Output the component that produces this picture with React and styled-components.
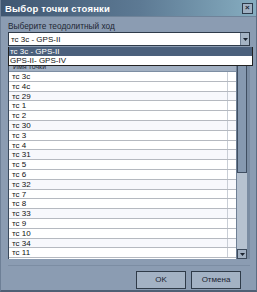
import React from "react";
import styled, { createGlobalStyle } from "styled-components";

const points = [
  "тс 3с",
  "тс 4с",
  "тс 29",
  "тс 1",
  "тс 2",
  "тс 30",
  "тс 3",
  "тс 4",
  "тс 31",
  "тс 5",
  "тс 6",
  "тс 32",
  "тс 7",
  "тс 8",
  "тс 33",
  "тс 9",
  "тс 10",
  "тс 34",
  "тс 11",
];

const routes = ["тс 3с - GPS-II", "GPS-II- GPS-IV"];

const GlobalStyle = createGlobalStyle`
  html, body {
    margin: 0;
    padding: 0;
    background: #8b9cb2;
  }
  body {
    font-family: "Liberation Sans", Arial, sans-serif;
    font-size: 8px;
  }
`;

const Window = styled.div`
  width: 257px;
  height: 292px;
  box-sizing: border-box;
  display: flex;
  flex-direction: column;
  background: #8b9cb2;
  border-left: 1px solid #6d7f96;
  border-right: 1px solid #5c6d83;
  border-bottom: 2px solid #4f5f74;
  overflow: hidden;
`;

const TitleBar = styled.div`
  height: 16px;
  display: flex;
  align-items: center;
  justify-content: space-between;
  padding: 0 3px 0 4px;
  background: linear-gradient(to right, #3f5671 0%, #5d7a94 55%, #86adc0 100%);
  border-bottom: 1px solid #6f8399;
  color: #ffffff;
  font-weight: bold;
  font-size: 9.5px;
  letter-spacing: 0.2px;
`;

const CloseButton = styled.div`
  width: 9px;
  height: 9px;
  display: flex;
  align-items: center;
  justify-content: center;
  background: #9fb0c2;
  border: 1px solid #2d3a4a;
  color: #1c2633;
  font-size: 8px;
  line-height: 1;
  font-weight: bold;
`;

const Body = styled.div`
  flex: 1;
  display: flex;
  flex-direction: column;
  padding: 0 6px 0 7px;
`;

const Label = styled.div`
  margin-top: 3px;
  height: 12px;
  line-height: 12px;
  color: #1e2733;
  font-size: 8.3px;
`;

const ComboWrap = styled.div`
  position: relative;
  height: 14px;
`;

const Combo = styled.div`
  height: 14px;
  box-sizing: border-box;
  display: flex;
  align-items: center;
  background: #ffffff;
  border: 1px solid #2f3b4a;
  padding-left: 2px;
  color: #111;
`;

const ComboText = styled.span`
  flex: 1;
`;

const ArrowButton = styled.div`
  width: 8px;
  height: 12px;
  display: flex;
  align-items: center;
  justify-content: center;
  background: #a4b3c4;
  border-left: 1px solid #6f8095;
`;

const Dropdown = styled.div`
  position: absolute;
  top: 15px;
  left: 0;
  right: -3px;
  z-index: 2;
  background: #ffffff;
  border: 1px solid #222;
  border-top: 0;
`;

const Option = styled.div`
  height: 9px;
  line-height: 9px;
  padding-left: 1px;
  background: ${(p) => (p.$active ? "#4b607c" : "#ffffff")};
  color: ${(p) => (p.$active ? "#ffffff" : "#111111")};
`;

const ListBox = styled.div`
  margin-top: 16px;
  display: flex;
  height: 197px;
  border-left: 1px solid #3b4a5c;
`;

const ListMain = styled.div`
  flex: 1;
  display: flex;
  flex-direction: column;
  background: #ffffff;
  overflow: hidden;
`;

const Header = styled.div`
  height: 9px;
  line-height: 9px;
  flex-shrink: 0;
  padding-left: 4px;
  background: #a2b0c2;
  border-bottom: 1px solid #7d8ea3;
  color: #1d2633;
  font-size: 7px;
`;

const Row = styled.div`
  height: 9.8px;
  flex-shrink: 0;
  box-sizing: border-box;
  display: flex;
  border-bottom: 1px solid #b5b9c0;
  background: ${(p) => (p.$shade ? "#f7f8fc" : "#ffffff")};
`;

const Cell = styled.div`
  flex: 1;
  padding-left: 3px;
  line-height: 9px;
  color: #111;
`;

const SpareCell = styled.div`
  width: 8px;
  border-left: 1px solid #c9ced6;
`;

const ScrollBar = styled.div`
  width: 10px;
  display: flex;
  flex-direction: column;
  background: #b6c2d0;
  border-left: 1px solid #6e7f94;
  border-right: 3px solid #7a8ca2;
`;

const ScrollButton = styled.div`
  height: 8px;
  flex-shrink: 0;
  display: flex;
  align-items: center;
  justify-content: center;
  background: #a2b1c3;
  border: 1px solid #3c4a5b;
`;

const Thumb = styled.div`
  height: 110px;
  flex-shrink: 0;
  background: #8699b0;
  border: 1px solid #3f4e61;
  border-top: 0;
`;

const Track = styled.div`
  flex: 1;
`;

const Footer = styled.div`
  flex: 1;
  display: flex;
  justify-content: flex-end;
  align-items: center;
  gap: 5px;
  padding: 3px 9px 0 0;
  border-top: 1px solid #7c8da3;
  margin-top: 6px;
`;

const Button = styled.div`
  width: 50px;
  height: 18px;
  box-sizing: border-box;
  display: flex;
  align-items: center;
  justify-content: center;
  background: #a3b2c4;
  border: 1px solid #2f3b49;
  color: #1a2230;
`;

const Arrow = () => (
  <svg width="5" height="3" viewBox="0 0 5 3">
    <path d="M0 0 H5 L2.5 3 Z" fill="#1b2430" />
  </svg>
);

const App = () => {
  return (
    <>
      <GlobalStyle />
      <Window>
        <TitleBar>
          <span>Выбор точки стоянки</span>
          <CloseButton>×</CloseButton>
        </TitleBar>
        <Body>
          <Label>Выберите теодолитный ход</Label>
          <ComboWrap>
            <Combo>
              <ComboText>{routes[0]}</ComboText>
              <ArrowButton>
                <Arrow />
              </ArrowButton>
            </Combo>
            <Dropdown>
              {routes.map((r, i) => (
                <Option key={r} $active={i === 0}>
                  {r}
                </Option>
              ))}
            </Dropdown>
          </ComboWrap>
          <ListBox>
            <ListMain>
              <Header>Имя точки</Header>
              {points.map((p, i) => (
                <Row key={p} $shade={i % 3 === 2}>
                  <Cell>{p}</Cell>
                  <SpareCell />
                </Row>
              ))}
            </ListMain>
            <ScrollBar>
              <Thumb />
              <Track />
              <ScrollButton>
                <Arrow />
              </ScrollButton>
            </ScrollBar>
          </ListBox>
          <Footer>
            <Button>OK</Button>
            <Button>Отмена</Button>
          </Footer>
        </Body>
      </Window>
    </>
  );
};

export default App;
